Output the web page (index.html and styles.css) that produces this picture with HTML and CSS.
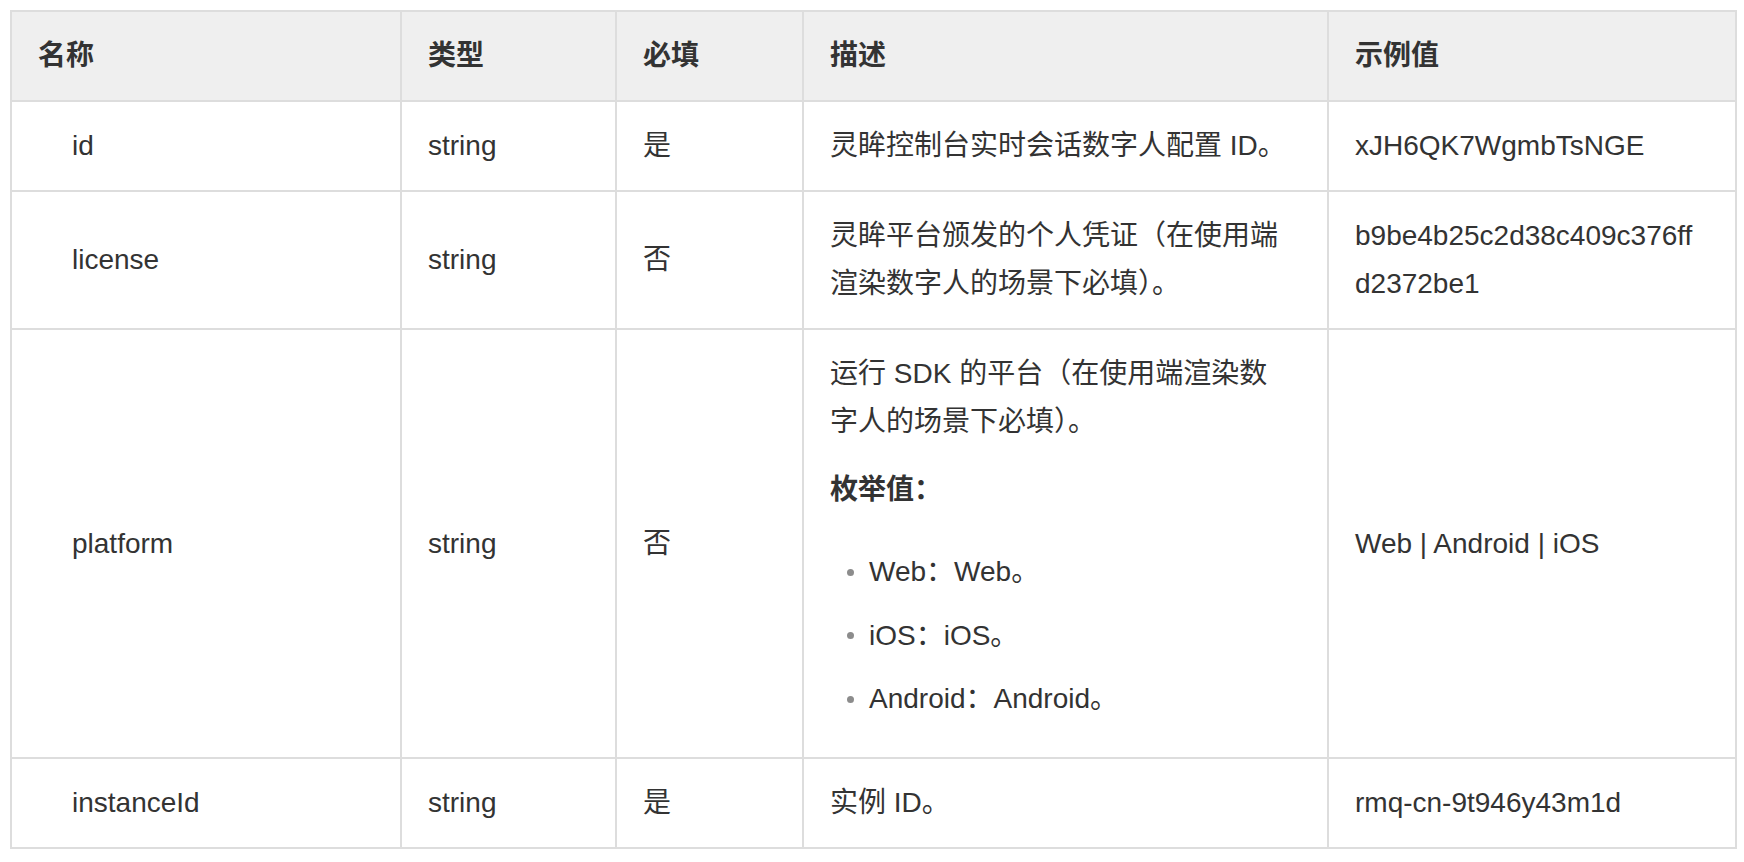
FILE: index.html
```html
<!DOCTYPE html>
<html lang="zh-CN">
<head>
<meta charset="utf-8">
<title>参数</title>
<link rel="stylesheet" href="styles.css">
</head>
<body>
<div class="page">
  <table class="params">
    <colgroup>
      <col class="c-name">
      <col class="c-type">
      <col class="c-req">
      <col class="c-desc">
      <col class="c-ex">
    </colgroup>
    <thead>
      <tr>
        <th>名称</th>
        <th>类型</th>
        <th>必填</th>
        <th>描述</th>
        <th>示例值</th>
      </tr>
    </thead>
    <tbody>
      <tr>
        <td class="name">id</td>
        <td>string</td>
        <td>是</td>
        <td class="desc">灵眸控制台实时会话数字人配置 ID。</td>
        <td class="ex">xJH6QK7WgmbTsNGE</td>
      </tr>
      <tr>
        <td class="name">license</td>
        <td>string</td>
        <td>否</td>
        <td class="desc">灵眸平台颁发的个人凭证（在使用端渲染数字人的场景下必填）。</td>
        <td class="ex">b9be4b25c2d38c409c376ffd2372be1</td>
      </tr>
      <tr>
        <td class="name">platform</td>
        <td>string</td>
        <td>否</td>
        <td class="desc">
          <p class="lead">运行 SDK 的平台（在使用端渲染数字人的场景下必填）。</p>
          <p class="enum-title">枚举值：</p>
          <ul class="enum">
            <li>Web：Web。</li>
            <li>iOS：iOS。</li>
            <li>Android：Android。</li>
          </ul>
        </td>
        <td class="ex">Web | Android | iOS</td>
      </tr>
      <tr>
        <td class="name">instanceId</td>
        <td>string</td>
        <td>是</td>
        <td class="desc">实例 ID。</td>
        <td class="ex">rmq-cn-9t946y43m1d</td>
      </tr>
    </tbody>
  </table>
</div>
</body>
</html>
```
FILE: styles.css
```css
html, body {
  margin: 0;
  padding: 0;
  background: #ffffff;
}

.page {
  padding: 10px 9px 10px 10px;
  font-family: "Liberation Sans", "Noto Sans CJK SC", sans-serif;
  font-size: 28px;
  line-height: 48px;
  color: #333333;
}

.params {
  width: 1725px;
  border-collapse: collapse;
  table-layout: fixed;
}

.c-name { width: 390px; }
.c-type { width: 215px; }
.c-req  { width: 187px; }
.c-desc { width: 525px; }
.c-ex   { width: 408px; }

.params th,
.params td {
  border: 2px solid #dddddd;
  padding: 20px 26px;
  text-align: left;
  vertical-align: middle;
}

.params th {
  background: #efefef;
  font-weight: 600;
  color: #333333;
}

.params td.name {
  padding-left: 60px;
}

.params td.desc {
  padding-right: 36px;
}

.params td.ex {
  padding-right: 28px;
  word-break: break-all;
}

.lead {
  margin: 0 0 20px 0;
}

.enum-title {
  margin: 0;
  font-weight: 700;
}

.enum {
  list-style: none;
  margin: 34px 0 14px 0;
  padding: 0;
}

.enum li {
  display: flex;
  align-items: center;
}

.enum li + li {
  margin-top: 15.5px;
}

.enum li::before {
  content: "";
  width: 7px;
  height: 7px;
  border-radius: 50%;
  background: #8c8c8c;
  margin-left: 17px;
  margin-right: 15px;
  flex: none;
}
```
